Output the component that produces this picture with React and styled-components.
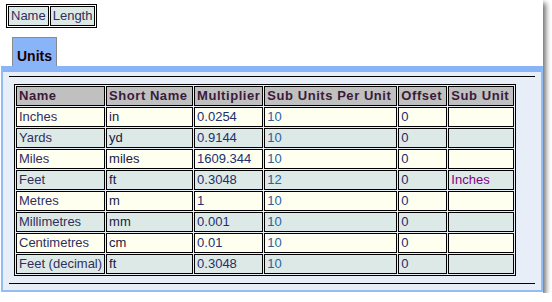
import styled, { createGlobalStyle } from "styled-components"

const Global = createGlobalStyle`
   body {
      margin: 0;
      background: #ffffff;
      font-family: "Liberation Sans", Arial, sans-serif;
      font-size: 13px;
   }
`

const Window = styled.div`
   width: 543px;
   height: 293px;
   box-sizing: border-box;
   background: #ffffff;
   box-shadow: 3px 3px 5px rgba(0, 0, 0, 0.55);
   padding: 4px 0 1px 1px;
   display: flex;
   flex-direction: column;
`

const Chips = styled.table`
   border: 1px solid #000;
   border-spacing: 1px;
   margin-left: 5px;
   align-self: flex-start;
`

const Chip = styled.td`
   border: 1px solid #000;
   background: #dde9e6;
   color: #303060;
   padding: 1px 2px;
   line-height: 16px;
`

const TabStrip = styled.div`
   display: flex;
   padding-left: 11px;
   margin-top: 9px;
`

const Tab = styled.div`
   width: 45px;
   height: 29px;
   border: 1px solid #8a8a8a;
   border-bottom: none;
   background: #8ab4f8;
   color: #1a0000;
   font-weight: bold;
   font-size: 14px;
   padding: 11px 0 0 4px;
   box-sizing: border-box;
   line-height: 14px;
`

const Panel = styled.div`
   flex: 1;
   border: 2px solid #93bcf2;
   border-top: 6px solid #8ab4f8;
   background: #e8eef8;
   padding: 4px 6px 0 6px;
`

const Rule = styled.div`
   height: 1px;
   background: #000;
`

const Grid = styled.table`
   border: 1px solid #000;
   border-spacing: 1px;
   margin: 7px 0 7px 5px;
`

const Head = styled.th`
   border: 1px solid #000;
   background: #c0c0c0;
   color: #3a1a3a;
   font-weight: bold;
   text-align: left;
   padding: 1px 2px;
   line-height: 16px;
   letter-spacing: 0.55px;
   width: ${p => p.w}px;
   white-space: nowrap;
`

const Cell = styled.td`
   border: 1px solid #000;
   background: ${p => (p.alt ? "#dde9e6" : "#fffff0")};
   color: ${p => p.color};
   padding: 1px 2px;
   line-height: 16px;
   white-space: nowrap;
`

const columns = [
   { title: "Name", w: 83, color: "#303060" },
   { title: "Short Name", w: 81, color: "#202040" },
   { title: "Multiplier", w: 62, color: "#203070" },
   { title: "Sub Units Per Unit", w: 127, color: "#2a62a0" },
   { title: "Offset", w: 43, color: "#202a70" },
   { title: "Sub Unit", w: 60, color: "#800080" },
]

const rows = [
   ["Inches", "in", "0.0254", "10", "0", ""],
   ["Yards", "yd", "0.9144", "10", "0", ""],
   ["Miles", "miles", "1609.344", "10", "0", ""],
   ["Feet", "ft", "0.3048", "12", "0", "Inches"],
   ["Metres", "m", "1", "10", "0", ""],
   ["Millimetres", "mm", "0.001", "10", "0", ""],
   ["Centimetres", "cm", "0.01", "10", "0", ""],
   ["Feet (decimal)", "ft", "0.3048", "10", "0", ""],
]

const App = () => {
   return (
      <Window>
         <Global />
         <Chips>
            <tbody>
               <tr>
                  <Chip>Name</Chip>
                  <Chip>Length</Chip>
               </tr>
            </tbody>
         </Chips>
         <TabStrip>
            <Tab>Units</Tab>
         </TabStrip>
         <Panel>
            <Rule />
            <Grid>
               <thead>
                  <tr>
                     {columns.map(c => (
                        <Head key={c.title} w={c.w}>{c.title}</Head>
                     ))}
                  </tr>
               </thead>
               <tbody>
                  {rows.map((r, i) => (
                     <tr key={r[0]}>
                        {r.map((v, j) => (
                           <Cell key={j} alt={i % 2 === 1} color={columns[j].color}>
                              {v}
                           </Cell>
                        ))}
                     </tr>
                  ))}
               </tbody>
            </Grid>
            <Rule />
         </Panel>
      </Window>
   )
}

export default App
